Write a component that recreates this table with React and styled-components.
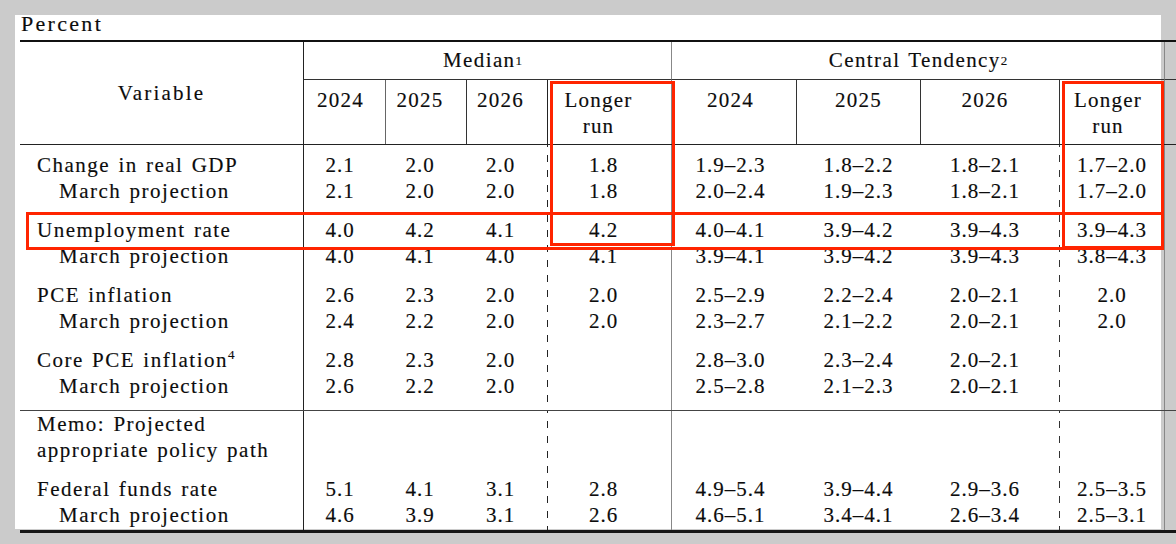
import React from "react";
import styled, { createGlobalStyle } from "styled-components";

const GlobalStyle = createGlobalStyle`
  html, body {
    margin: 0;
    padding: 0;
    background: #cbcbcb;
  }
  body {
    font-family: "Liberation Serif", "Times New Roman", serif;
    color: #0c0c0c;
    -webkit-text-stroke: 0.15px #0c0c0c;
  }
`;

// column widths, left to right (variable, median x4, central tendency x4, edge)
const WIDTHS = [283, 82, 81, 81, 124, 125, 124, 139, 105, 12];
const GRID = WIDTHS.map((w) => `${w}px`).join(" ");

const COLS = [
  { pad: 9, head: 8, body: "solid", color: "#222" },
  { pad: 12, head: 12, body: "none", color: "#666" },
  { pad: 13, head: 13, body: "none", color: "#333" },
  { pad: 12, head: 22, body: "dashed", color: "#222" },
  { pad: 7, head: 7, body: "solid", color: "#888" },
  { pad: 0, head: 0, body: "none", color: "#333" },
  { pad: 10, head: 10, body: "none", color: "#333" },
  { pad: 0, head: 8, body: "dashed", color: "#333" },
];

const YEARS = ["2024", "2025", "2026", "Longer run"];

const SECTIONS = [
  {
    top: 7,
    bottom: 11,
    gap: 12,
    groups: [
      [
        { label: "Change in real GDP", values: ["2.1", "2.0", "2.0", "1.8", "1.9–2.3", "1.8–2.2", "1.8–2.1", "1.7–2.0"] },
        { label: "March projection", sub: true, values: ["2.1", "2.0", "2.0", "1.8", "2.0–2.4", "1.9–2.3", "1.8–2.1", "1.7–2.0"] },
      ],
      [
        { label: "Unemployment rate", values: ["4.0", "4.2", "4.1", "4.2", "4.0–4.1", "3.9–4.2", "3.9–4.3", "3.9–4.3"] },
        { label: "March projection", sub: true, values: ["4.0", "4.1", "4.0", "4.1", "3.9–4.1", "3.9–4.2", "3.9–4.3", "3.8–4.3"] },
      ],
      [
        { label: "PCE inflation", values: ["2.6", "2.3", "2.0", "2.0", "2.5–2.9", "2.2–2.4", "2.0–2.1", "2.0"] },
        { label: "March projection", sub: true, values: ["2.4", "2.2", "2.0", "2.0", "2.3–2.7", "2.1–2.2", "2.0–2.1", "2.0"] },
      ],
      [
        { label: "Core PCE inflation", note: "4", values: ["2.8", "2.3", "2.0", "", "2.8–3.0", "2.3–2.4", "2.0–2.1", ""] },
        { label: "March projection", sub: true, values: ["2.6", "2.2", "2.0", "", "2.5–2.8", "2.1–2.3", "2.0–2.1", ""] },
      ],
    ],
  },
  {
    top: 0,
    bottom: 2,
    gap: 13,
    divider: true,
    groups: [
      [
        { label: "Memo: Projected", values: [] },
        { label: "appropriate policy path", values: [] },
      ],
      [
        { label: "Federal funds rate", values: ["5.1", "4.1", "3.1", "2.8", "4.9–5.4", "3.9–4.4", "2.9–3.6", "2.5–3.5"] },
        { label: "March projection", sub: true, values: ["4.6", "3.9", "3.1", "2.6", "4.6–5.1", "3.4–4.1", "2.6–3.4", "2.5–3.1"] },
      ],
    ],
  },
];

// grey viewer backdrop with the white page sheet painted behind the table
const Page = styled.div`
  min-height: 544px;
  box-sizing: border-box;
  padding: 15px 0 0 20px;
  background: linear-gradient(#fff, #fff) 15px 15px / 1146px 514px no-repeat,
    #cbcbcb;
`;

const Caption = styled.div`
  height: 25px;
  margin-left: 1px;
  font-size: 22px;
  line-height: 18px;
  letter-spacing: 2.3px;
`;

const Table = styled.div`
  position: relative;
  width: 1156px;
  border-top: 2px solid #111;
  border-bottom: 3px solid #161616;
  font-size: 21px;
`;

const Header = styled.div`
  display: grid;
  grid-template-columns: ${GRID};
  grid-template-rows: 38px 64px;
  border-bottom: 1px solid #222;
`;

const VariableHead = styled.div`
  grid-row: 1 / span 2;
  grid-column: 1;
  display: flex;
  align-items: center;
  justify-content: center;
  padding-top: 1px;
  letter-spacing: 2.2px;
`;

const GroupHead = styled.div`
  grid-row: 1;
  grid-column: ${({ $col, $span }) => `${$col} / span ${$span}`};
  display: flex;
  align-items: center;
  justify-content: center;
  padding-right: ${({ $pad }) => $pad}px;
  border-left: 1px solid ${({ $color }) => $color};
  border-bottom: 1px solid #333;
  box-sizing: border-box;
  letter-spacing: 1.4px;
  word-spacing: 1.5px;
`;

const YearHead = styled.div`
  grid-row: 2;
  padding: 7px ${({ $pad }) => $pad}px 0 0;
  border-left: 1px solid ${({ $color }) => $color};
  text-align: center;
  line-height: 26px;
  letter-spacing: 1.2px;
`;

const Sup = styled.span`
  font-size: 13px;
  vertical-align: 8px;
  line-height: 0;
  letter-spacing: 0;
`;

const Section = styled.div`
  display: grid;
  grid-template-columns: ${GRID};
  border-top: ${({ $divider }) => ($divider ? "1px solid #444" : "none")};
`;

const Column = styled.div`
  padding: ${({ $top }) => $top}px ${({ $pad }) => $pad || 0}px
    ${({ $bottom }) => $bottom}px 0;
  border-left: 1px solid
    ${({ $line, $color }) => ($line === "solid" ? $color : "transparent")};
  text-align: center;
  letter-spacing: 1px;
  ${({ $line, $color }) =>
    $line === "dashed" &&
    `
    background-image: linear-gradient(to bottom, ${$color} 0 7px, transparent 7px 15px);
    background-size: 1px 15px;
    background-position: 0 10px;
    background-repeat: repeat-y;
    background-origin: border-box;
  `}
`;

const LabelColumn = styled(Column)`
  text-align: left;
  letter-spacing: 1.5px;
  word-spacing: 1.5px;
`;

const Group = styled.div`
  & + & {
    margin-top: ${({ $gap }) => $gap}px;
  }
`;

const Line = styled.div`
  height: 26px;
  line-height: 26px;
  white-space: nowrap;
`;

const Label = styled(Line)`
  padding-left: ${({ $sub }) => ($sub ? 38 : 16)}px;
`;

const Mark = styled.div`
  position: absolute;
  box-sizing: border-box;
  border: 3px solid #ff2400;
  pointer-events: none;
`;

const MedianLongRunMark = styled(Mark)`
  left: 530px;
  top: 39px;
  width: 125px;
  height: 165px;
`;

const TendencyLongRunMark = styled(Mark)`
  left: 1042px;
  top: 39px;
  width: 102px;
  height: 168px;
`;

const UnemploymentMark = styled(Mark)`
  left: 6px;
  top: 170px;
  width: 1138px;
  height: 38px;
`;

function BodySection({ section }) {
  const { top, bottom, gap, groups, divider } = section;
  return (
    <Section $divider={divider}>
      <LabelColumn $top={top} $bottom={bottom} $line="none">
        {groups.map((rows, g) => (
          <Group key={g} $gap={gap}>
            {rows.map((row, r) => (
              <Label key={r} $sub={row.sub}>
                {row.label}
                {row.note && <Sup>{row.note}</Sup>}
              </Label>
            ))}
          </Group>
        ))}
      </LabelColumn>
      {COLS.map((col, c) => (
        <Column
          key={c}
          $top={top}
          $bottom={bottom}
          $pad={col.pad}
          $line={col.body}
          $color={col.color}
        >
          {groups.map((rows, g) => (
            <Group key={g} $gap={gap}>
              {rows.map((row, r) => (
                <Line key={r}>{row.values[c] || ""}</Line>
              ))}
            </Group>
          ))}
        </Column>
      ))}
      <Column $top={top} $bottom={bottom} $line="solid" $color="#888" />
    </Section>
  );
}

export default function App() {
  return (
    <Page>
      <GlobalStyle />
      <Caption>Percent</Caption>
      <Table>
        <Header>
          <VariableHead>Variable</VariableHead>
          <GroupHead $col={2} $span={4} $pad={10} $color="#222">
            Median<Sup>1</Sup>
          </GroupHead>
          <GroupHead $col={6} $span={4} $pad={0} $color="#888">
            Central Tendency<Sup>2</Sup>
          </GroupHead>
          <GroupHead $col={10} $span={1} $pad={0} $color="#888" />
          {COLS.map((col, c) => (
            <YearHead key={c} $pad={col.head} $color={col.color}>
              {YEARS[c % 4] === "Longer run" ? (
                <>
                  Longer
                  <br />
                  run
                </>
              ) : (
                YEARS[c % 4]
              )}
            </YearHead>
          ))}
          <YearHead $pad={0} $color="#888" />
        </Header>
        {SECTIONS.map((section, i) => (
          <BodySection key={i} section={section} />
        ))}
        <MedianLongRunMark />
        <TendencyLongRunMark />
        <UnemploymentMark />
      </Table>
    </Page>
  );
}
